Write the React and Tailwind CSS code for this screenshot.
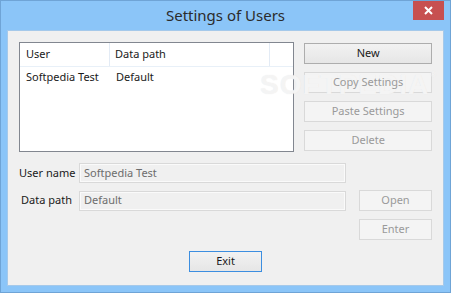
import React from "react";

const ui = { fontFamily: '"Noto Sans", "Open Sans", sans-serif' };

const Btn = ({ children, disabled, primary, className = "" }) => (
    <div
        className={
            "flex h-[21px] shrink-0 items-center justify-center whitespace-nowrap border text-[11px] " +
            (disabled
                ? "border-[#d9d9d9] bg-[#f4f4f4] text-[#9a9a9a] "
                : primary
                ? "border-[#3c8ee0] bg-gradient-to-b from-[#f2f2f2] to-[#e6e6e6] text-[#1a1a1a] "
                : "border-[#adadad] bg-gradient-to-b from-[#f2f2f2] to-[#e6e6e6] text-[#1a1a1a] ") +
            className
        }
    >
        <span className="relative z-20">{children}</span>
    </div>
);

const Field = ({ value }) => (
    <div className="flex h-[20px] w-[267px] items-center border border-[#d9d9d9] bg-[#f0f0f0] px-[4px] text-[11px] text-[#6d6d6d] shadow-[inset_0_0_0_1px_#fafafa]">
        {value}
    </div>
);

export default function App() {
    return (
        <div
            className="flex h-[293px] w-[451px] flex-col overflow-hidden border border-[#6fa4d6] bg-[#8bc5f8]"
            style={ui}
        >
            <div className="relative flex h-[29px] shrink-0 items-center justify-center">
                <span className="text-[15px] text-[#2b2b2b]">Settings of Users</span>
                <div className="absolute right-[6px] top-0 flex h-[19px] w-[31px] items-center justify-center bg-[#c75050]">
                    <svg width="9" height="9" viewBox="0 0 9 9">
                        <path d="M1 1 L8 8 M8 1 L1 8" stroke="#fff" strokeWidth="2" />
                    </svg>
                </div>
            </div>

            <div className="relative mx-[6px] mb-[6px] min-h-0 flex-1 border border-[#a5c9ea] bg-[#f0f0f0] px-[11px] pt-[11px]">
                <div className="flex">
                    <div className="h-[110px] w-[276px] border border-[#828790] bg-white text-[11px] text-[#1a1a1a]">
                        <div className="flex h-[24px] border-b border-[#e8f0f8]">
                            <div className="flex w-[90px] items-center border-r border-[#e3ebf5] pl-[6px]">User</div>
                            <div className="flex w-[160px] items-center border-r border-[#e3ebf5] pl-[5px]">Data path</div>
                        </div>
                        <div className="flex h-[20px] items-center whitespace-nowrap">
                            <div className="w-[90px] pl-[6px]">Softpedia Test</div>
                            <div className="pl-[6px]">Default</div>
                        </div>
                    </div>
                    <div className="ml-[10px] flex w-[128px] flex-col gap-[8px] pt-[1px]">
                        <Btn>New</Btn>
                        <Btn disabled>Copy Settings</Btn>
                        <Btn disabled>Paste Settings</Btn>
                        <Btn disabled>Delete</Btn>
                    </div>
                </div>

                <div className="mt-[11px] flex flex-col gap-[7px] text-[11px] text-[#1a1a1a]">
                    <div className="flex items-center">
                        <div className="w-[53px] whitespace-nowrap text-right">User name</div>
                        <div className="ml-[7px]">
                            <Field value="Softpedia Test" />
                        </div>
                    </div>
                    <div className="flex items-center">
                        <div className="w-[53px] whitespace-nowrap text-right">Data path</div>
                        <div className="ml-[7px]">
                            <Field value="Default" />
                        </div>
                        <Btn disabled className="ml-auto w-[73px]">Open</Btn>
                    </div>
                    <div className="mt-[1px] flex justify-end">
                        <Btn disabled className="w-[73px]">Enter</Btn>
                    </div>
                </div>

                <div className="mt-[11px] flex justify-center">
                    <Btn primary className="w-[73px]">Exit</Btn>
                </div>

                <div
                    className="pointer-events-none absolute left-[252px] top-[40px] z-10 text-[28px] font-bold leading-none tracking-[1px] text-white/60 [text-shadow:0_0_1px_#e4e4e4]"
                    style={{ fontFamily: '"Liberation Sans", sans-serif' }}
                >
                    SOFTPEDIA<span className="ml-[1px] align-top text-[8px]">®</span>
                </div>
            </div>
        </div>
    );
}
